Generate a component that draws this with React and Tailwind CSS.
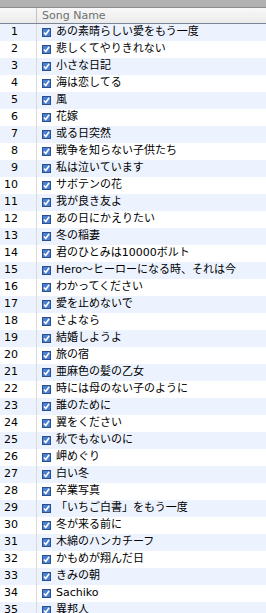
const songs = [
  'あの素晴らしい愛をもう一度',
  '悲しくてやりきれない',
  '小さな日記',
  '海は恋してる',
  '風',
  '花嫁',
  '或る日突然',
  '戦争を知らない子供たち',
  '私は泣いています',
  'サボテンの花',
  '我が良き友よ',
  'あの日にかえりたい',
  '冬の稲妻',
  '君のひとみは10000ボルト',
  'Hero〜ヒーローになる時、それは今',
  'わかってください',
  '愛を止めないで',
  'さよなら',
  '結婚しようよ',
  '旅の宿',
  '亜麻色の髪の乙女',
  '時には母のない子のように',
  '誰のために',
  '翼をください',
  '秋でもないのに',
  '岬めぐり',
  '白い冬',
  '卒業写真',
  '「いちご白書」をもう一度',
  '冬が来る前に',
  '木綿のハンカチーフ',
  'かもめが翔んだ日',
  'きみの朝',
  'Sachiko',
  '異邦人',
];

function Check() {
  return (
    <svg width="9" height="9" viewBox="0 0 9 9" className="shrink-0">
      <rect x="0.5" y="0.5" width="8" height="8" fill="#4a7fd1" stroke="#2a4f8f" />
      <path d="M2 4.5 L3.8 6.5 L7.2 1.8" fill="none" stroke="#ffffff" strokeWidth="1.6" />
    </svg>
  );
}

export default function App() {
  return (
    <div
      className="w-[266px] h-[613px] overflow-hidden bg-white"
      style={{ fontFamily: "'DejaVu Sans', 'Noto Sans CJK JP', sans-serif" }}
    >
      {/* toolbar strip */}
      <div className="h-[8px] bg-[#b2b2b2] border-b border-[#8c8c8c]" />

      {/* header */}
      <div className="flex h-[16px] bg-gradient-to-b from-[#f8f8f8] to-[#ebebeb] border-b border-[#7a8494]">
        <div className="w-[37px] shrink-0 border-r border-[#c4c4c4]" />
        <div className="pl-[5px] text-[11px] leading-[15px] text-[#6e6e6e]">Song Name</div>
      </div>

      {/* rows */}
      <div>
        {songs.map((s, i) => (
          <div
            key={i}
            className={`flex h-[17px] items-center ${i % 2 === 0 ? 'bg-[#edf3fe]' : 'bg-white'}`}
          >
            <div className="w-[37px] shrink-0 h-full flex items-center justify-end pr-[18px] border-r border-[#dadada] text-[11px] text-black">
              {i + 1}
            </div>
            <div className="pl-[5px] flex items-center gap-[5px] whitespace-nowrap text-[11px] text-black">
              <Check />
              <span>{s}</span>
            </div>
          </div>
        ))}
      </div>
    </div>
  );
}
